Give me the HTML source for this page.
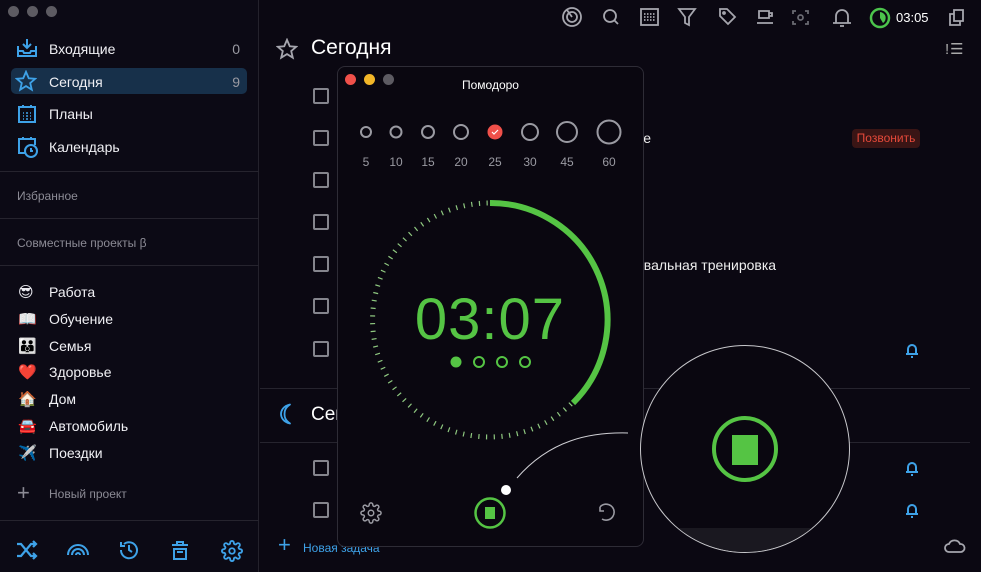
<!DOCTYPE html>
<html><head><meta charset="utf-8"><style>
*{margin:0;padding:0;box-sizing:border-box}
body{width:981px;height:572px;background:#0b0812;overflow:hidden;position:relative;font-family:"Liberation Sans","DejaVu Sans",sans-serif;color:#e8e8ee}
.a{position:absolute}
.side{left:0;top:0;width:259px;height:572px;background:#0c0a15;border-right:1px solid #24222c}
.hr{position:absolute;height:1px;background:#26242e}
.nav{position:absolute;left:49px;font-size:14px;color:#f0f0f4}
.cnt{position:absolute;right:18px;font-size:14px;color:#9a9aa2}
.sec{position:absolute;left:17px;font-size:12px;color:#8c8b95}
.emo{position:absolute;left:18px;font-size:15px;font-family:"DejaVu Sans",sans-serif}
.cb{position:absolute;left:313px;width:16px;height:16px;border:2px solid #85858d;border-radius:2px}
.lbl{position:absolute;font-size:12px;color:#9a9aa2;width:30px;text-align:center}
</style></head><body>
<div class="a side">
 <div class="a" style="left:8px;top:6px;width:11px;height:11px;border-radius:50%;background:#5d5b62"></div>
 <div class="a" style="left:27px;top:6px;width:11px;height:11px;border-radius:50%;background:#5d5b62"></div>
 <div class="a" style="left:46px;top:6px;width:11px;height:11px;border-radius:50%;background:#5d5b62"></div>
 <svg class="a" style="left:16px;top:38px" width="22" height="20" viewBox="0 0 22 20" fill="none" stroke="#3ea2e8" stroke-width="2"><path d="M2 8v10h18V8M11 1v9M7 6l4 4 4-4M2 13h5l1 2h6l1-2h5"/></svg>
 <div class="nav" style="top:41px">Входящие</div><div class="cnt" style="top:41px">0</div>
 <div class="a" style="left:11px;top:68px;width:236px;height:26px;border-radius:5px;background:#17304a"></div>
 <svg class="a" style="left:15px;top:70px" width="22" height="22" viewBox="0 0 24 24" fill="none" stroke="#3ea2e8" stroke-width="2"><path d="M12 2l3 7 7 .6-5.4 4.7 1.7 7.2L12 17.6 5.7 21.5l1.7-7.2L2 9.6 9 9z"/></svg>
 <div class="nav" style="top:74px">Сегодня</div><div class="cnt" style="top:74px">9</div>
 <svg class="a" style="left:17px;top:104px" width="20" height="20" viewBox="0 0 20 20" fill="none" stroke="#3ea2e8" stroke-width="2"><rect x="2" y="3" width="16" height="15"/><path d="M6 1v3M14 1v3" /><path d="M6 9h1M9 9h2M13 9h1M6 12h1M9 12h2M13 12h1M6 15h1M9 15h2M13 15h1" stroke-width="1.5"/></svg>
 <div class="nav" style="top:106px">Планы</div>
 <svg class="a" style="left:17px;top:135px" width="22" height="24" viewBox="0 0 22 24" fill="none" stroke="#3ea2e8" stroke-width="2"><path d="M8 18H2V4h16v6M6 2v3M14 2v3"/><circle cx="14" cy="16" r="6"/><path d="M14 13v3h2"/></svg>
 <div class="nav" style="top:139px">Календарь</div>
 <div class="hr" style="left:0;top:171px;width:259px"></div>
 <div class="sec" style="top:189px">Избранное</div>
 <div class="hr" style="left:0;top:218px;width:259px"></div>
 <div class="sec" style="top:236px">Совместные проекты β</div>
 <div class="hr" style="left:0;top:265px;width:259px"></div>
 <div class="emo" style="top:283px">😎</div><div class="nav" style="top:284px">Работа</div>
 <div class="emo" style="top:310px">📖</div><div class="nav" style="top:311px">Обучение</div>
 <div class="emo" style="top:337px">👪</div><div class="nav" style="top:338px">Семья</div>
 <div class="emo" style="top:363px">❤️</div><div class="nav" style="top:364px">Здоровье</div>
 <div class="emo" style="top:390px">🏠</div><div class="nav" style="top:391px">Дом</div>
 <div class="emo" style="top:417px">🚘</div><div class="nav" style="top:418px">Автомобиль</div>
 <div class="emo" style="top:444px">✈️</div><div class="nav" style="top:445px">Поездки</div>
 <div class="a" style="left:17px;top:484px;font-size:22px;color:#8c8b95;line-height:18px">+</div>
 <div class="a" style="left:49px;top:487px;font-size:12px;color:#8c8b95">Новый проект</div>
 <div class="hr" style="left:0;top:520px;width:259px"></div>
 <svg class="a" style="left:16px;top:540px" width="22" height="20" viewBox="0 0 22 20" fill="none" stroke="#3ea2e8" stroke-width="2.2"><path d="M1 4h4l10 12h5M1 16h4l10-12h5M17 1l3 3-3 3M17 13l3 3-3 3"/></svg>
 <svg class="a" style="left:66px;top:542px" width="24" height="14" viewBox="0 0 24 14" fill="none" stroke="#3ea2e8" stroke-width="2"><path d="M2 13a10 10 0 0 1 20 0M6 13a6 6 0 0 1 12 0M10 13a2 2 0 0 1 4 0"/></svg>
 <svg class="a" style="left:118px;top:539px" width="22" height="22" viewBox="0 0 22 22" fill="none" stroke="#3ea2e8" stroke-width="2"><path d="M3 11a8 8 0 1 0 3-6M3 3v4h4M11 6v5l3 2"/></svg>
 <svg class="a" style="left:171px;top:540px" width="18" height="20" viewBox="0 0 18 20" fill="none" stroke="#3ea2e8" stroke-width="2"><path d="M1 5h16M6 5V2h6v3M3 9h12v10H3zM6 12h6"/></svg>
 <svg class="a" style="left:221px;top:540px" width="22" height="22" viewBox="0 0 24 24" fill="none" stroke="#3ea2e8" stroke-width="2"><circle cx="12" cy="12" r="3"/><path d="M19.4 15a1.7 1.7 0 0 0 .3 1.8l.1.1a2 2 0 1 1-2.8 2.8l-.1-.1a1.7 1.7 0 0 0-2.9 1.2V21a2 2 0 1 1-4 0v-.1a1.7 1.7 0 0 0-2.9-1.2l-.1.1a2 2 0 1 1-2.8-2.8l.1-.1A1.7 1.7 0 0 0 3.1 14H3a2 2 0 1 1 0-4h.1a1.7 1.7 0 0 0 1.2-2.9l-.1-.1a2 2 0 1 1 2.8-2.8l.1.1A1.7 1.7 0 0 0 10 3.1V3a2 2 0 1 1 4 0v.1a1.7 1.7 0 0 0 2.9 1.2l.1-.1a2 2 0 1 1 2.8 2.8l-.1.1A1.7 1.7 0 0 0 20.9 10H21a2 2 0 1 1 0 4h-.1a1.7 1.7 0 0 0-1.5 1z"/></svg>
</div>

<!-- toolbar -->
<svg class="a" style="left:560px;top:6px" width="420" height="24" viewBox="0 0 420 24" fill="none" stroke="#a6a6ae" stroke-width="1.8">
 <circle cx="12" cy="11" r="9"/><circle cx="12" cy="11" r="5"/><path d="M12 11L7 4"/>
 <circle cx="50" cy="10" r="6"/><path d="M54 14l4 4"/>
 <rect x="81" y="3" width="17" height="16"/><path d="M84 8h11M84 11h11M84 14h11" stroke-dasharray="1.5 1.5"/>
 <path d="M119 3h16l-6 8v8l-4-2v-6z"/>
 <path d="M160 3h7l8 8-7 7-8-8z"/><circle cx="164" cy="7" r="1"/>
 <path d="M199 5h10v7h-10zM209 7h3v3h-3M197 17h16"/>
 <path d="M236 5h-3v3M245 5h3v3M236 18h-3v-3M245 18h3v-3" stroke="#6a6a72"/><circle cx="240.5" cy="11.5" r="2.5" stroke="#6a6a72"/>
 <path d="M276 17V10a6 6 0 0 1 12 0v7zM273 17h18M280 20h4"/>
 <path d="M403 4h-9v4h-4v11h10v-4h3zM394 8v7h6"/>
</svg>
<svg class="a" style="left:869px;top:7px" width="22" height="22" viewBox="0 0 22 22"><circle cx="11" cy="11" r="9" fill="none" stroke="#4cc44c" stroke-width="2.5"/><path d="M11 11V5a6 6 0 0 1 3 11z" fill="#4cc44c"/></svg>
<div class="a" style="left:896px;top:10px;font-size:13px;color:#fff">03:05</div>
<div class="a" style="left:945px;top:40px;font-size:15px;color:#aaa;letter-spacing:1px">!☰</div>

<!-- main -->
<svg class="a" style="left:276px;top:38px" width="22" height="22" viewBox="0 0 24 24" fill="none" stroke="#a6a6ae" stroke-width="2"><path d="M12 2l3 7 7 .6-5.4 4.7 1.7 7.2L12 17.6 5.7 21.5l1.7-7.2L2 9.6 9 9z"/></svg>
<div class="a" style="left:311px;top:36px;font-size:21px;color:#fff">Сегодня</div>
<div class="cb" style="top:88px"></div><div class="cb" style="top:130px"></div><div class="cb" style="top:172px"></div><div class="cb" style="top:214px"></div><div class="cb" style="top:256px"></div><div class="cb" style="top:298px"></div><div class="cb" style="top:341px"></div>
<div class="a" style="left:636px;top:130px;font-size:14px;color:#eee">че</div>
<div class="a" style="left:852px;top:129px;width:68px;height:19px;border-radius:4px;background:#3a1515;color:#e5493a;font-size:12px;text-align:center;line-height:19px">Позвонить</div>
<div class="a" style="left:636px;top:257px;font-size:14px;color:#eee">рвальная тренировка</div>
<div class="hr" style="left:260px;top:388px;width:710px"></div>
<div class="hr" style="left:260px;top:442px;width:710px"></div>
<svg class="a" style="left:278px;top:403px" width="16" height="22" viewBox="0 0 16 22"><path d="M12 1.5C5 3 3 8 3 11s2 8 9 9.5C7 17 6.5 14 6.5 11S7 5 12 1.5z" fill="none" stroke="#3ea2e8" stroke-width="1.8" stroke-linejoin="round"/></svg>
<div class="a" style="left:311px;top:404px;font-size:19px;color:#fff">Сег</div>
<div class="cb" style="top:460px"></div><div class="cb" style="top:502px"></div>
<svg class="a" style="left:904px;top:342px" width="16" height="16" viewBox="0 0 16 16" fill="none" stroke="#3ea2e8" stroke-width="2"><path d="M4 12V7a4 4 0 0 1 8 0v5zM2 12h12M7 15h2"/></svg>
<svg class="a" style="left:904px;top:460px" width="16" height="16" viewBox="0 0 16 16" fill="none" stroke="#3ea2e8" stroke-width="2"><path d="M4 12V7a4 4 0 0 1 8 0v5zM2 12h12M7 15h2"/></svg>
<svg class="a" style="left:904px;top:502px" width="16" height="16" viewBox="0 0 16 16" fill="none" stroke="#3ea2e8" stroke-width="2"><path d="M4 12V7a4 4 0 0 1 8 0v5zM2 12h12M7 15h2"/></svg>
<div class="a" style="left:278px;top:534px;font-size:22px;color:#3ea2e8;line-height:22px">+</div>
<div class="a" style="left:303px;top:541px;font-size:12px;color:#3ea2e8">Новая задача</div>
<svg class="a" style="left:944px;top:538px" width="22" height="16" viewBox="0 0 22 16" fill="none" stroke="#a6a6ae" stroke-width="1.8"><path d="M5 14a4 4 0 0 1 0-8a6 6 0 0 1 11 0a4 4 0 0 1 1 8z"/></svg>

<!-- pomodoro window -->
<div class="a" style="left:337px;top:66px;width:307px;height:481px;border-radius:8px;background:#0a0710;border:1px solid #2e2c36"></div>
<div class="a" style="left:345px;top:74px;width:11px;height:11px;border-radius:50%;background:#f0504a"></div>
<div class="a" style="left:364px;top:74px;width:11px;height:11px;border-radius:50%;background:#f2b628"></div>
<div class="a" style="left:383px;top:74px;width:11px;height:11px;border-radius:50%;background:#5d5b62"></div>
<div class="a" style="left:462px;top:78px;font-size:12px;color:#fff">Помодоро</div>
<svg class="a" style="left:337px;top:110px" width="307" height="50" viewBox="0 0 307 50" fill="none" stroke="#9a9aa2" stroke-width="2">
 <circle cx="29" cy="22" r="5"/><circle cx="59" cy="22" r="5.5"/><circle cx="91" cy="22" r="6"/><circle cx="124" cy="22" r="7"/>
 <circle cx="158" cy="22" r="7.5" fill="#f0504a" stroke="none"/><path d="M155 22l2 2 4-4" stroke="#fff" stroke-width="1.2"/>
 <circle cx="193" cy="22" r="8"/><circle cx="230" cy="22" r="10"/><circle cx="272" cy="22" r="11.5"/>
</svg>
<div class="lbl" style="left:351px;top:155px">5</div><div class="lbl" style="left:381px;top:155px">10</div><div class="lbl" style="left:413px;top:155px">15</div><div class="lbl" style="left:446px;top:155px">20</div><div class="lbl" style="left:480px;top:155px">25</div><div class="lbl" style="left:515px;top:155px">30</div><div class="lbl" style="left:552px;top:155px">45</div><div class="lbl" style="left:594px;top:155px">60</div>
<svg class="a" style="left:337px;top:190px" width="307" height="360" viewBox="337 190 307 360" fill="none">
 <path d="M571 404 A117 117 0 1 1 488 203" stroke="#8fc880" stroke-width="5" stroke-dasharray="1.2 6.5"/>
 <path d="M490 203 A117 117 0 0 1 573 403" stroke="#55c444" stroke-width="6"/>
 <circle cx="456" cy="362" r="5.5" fill="#55c444"/>
 <circle cx="479" cy="362" r="5" stroke="#55c444" stroke-width="2"/><circle cx="502" cy="362" r="5" stroke="#55c444" stroke-width="2"/><circle cx="525" cy="362" r="5" stroke="#55c444" stroke-width="2"/>
 <circle cx="490" cy="513" r="14.5" stroke="#55c444" stroke-width="2.5"/><rect x="485" y="507" width="10" height="12" fill="#55c444"/>
 <path d="M600 507a8 8 0 1 1 2 12M600 507v4h4" stroke="#9a9aa2" stroke-width="1.6"/>
 <path d="M517 478 C550 440 590 432 628 433" stroke="#cfcfd4" stroke-width="1"/>
 <circle cx="506" cy="490" r="5" fill="#fff"/>
</svg>
<svg class="a" style="left:360px;top:502px" width="22" height="22" viewBox="0 0 24 24" fill="none" stroke="#9a9aa2" stroke-width="1.6"><circle cx="12" cy="12" r="3"/><path d="M19.4 15a1.7 1.7 0 0 0 .3 1.8l.1.1a2 2 0 1 1-2.8 2.8l-.1-.1a1.7 1.7 0 0 0-2.9 1.2V21a2 2 0 1 1-4 0v-.1a1.7 1.7 0 0 0-2.9-1.2l-.1.1a2 2 0 1 1-2.8-2.8l.1-.1A1.7 1.7 0 0 0 3.1 14H3a2 2 0 1 1 0-4h.1a1.7 1.7 0 0 0 1.2-2.9l-.1-.1a2 2 0 1 1 2.8-2.8l.1.1A1.7 1.7 0 0 0 10 3.1V3a2 2 0 1 1 4 0v.1a1.7 1.7 0 0 0 2.9 1.2l.1-.1a2 2 0 1 1 2.8 2.8l-.1.1A1.7 1.7 0 0 0 20.9 10H21a2 2 0 1 1 0 4h-.1a1.7 1.7 0 0 0-1.5 1z"/></svg>
<div class="a" style="left:405px;top:286px;width:170px;text-align:center;font-size:58px;color:#55c444;letter-spacing:1px">03:07</div>

<!-- magnifier -->
<div class="a" style="left:640px;top:345px;width:210px;height:208px;border-radius:50%;background:#0a0710;border:1px solid #c8c8cc;overflow:hidden">
 <div class="a" style="left:0;top:182px;width:210px;height:30px;background:#1a1820"></div>
 <div class="a" style="left:71px;top:70px;width:66px;height:66px;border-radius:50%;border:4px solid #55c444"></div>
 <div class="a" style="left:91px;top:89px;width:26px;height:30px;background:#55c444"></div>
</div>
</body></html>
